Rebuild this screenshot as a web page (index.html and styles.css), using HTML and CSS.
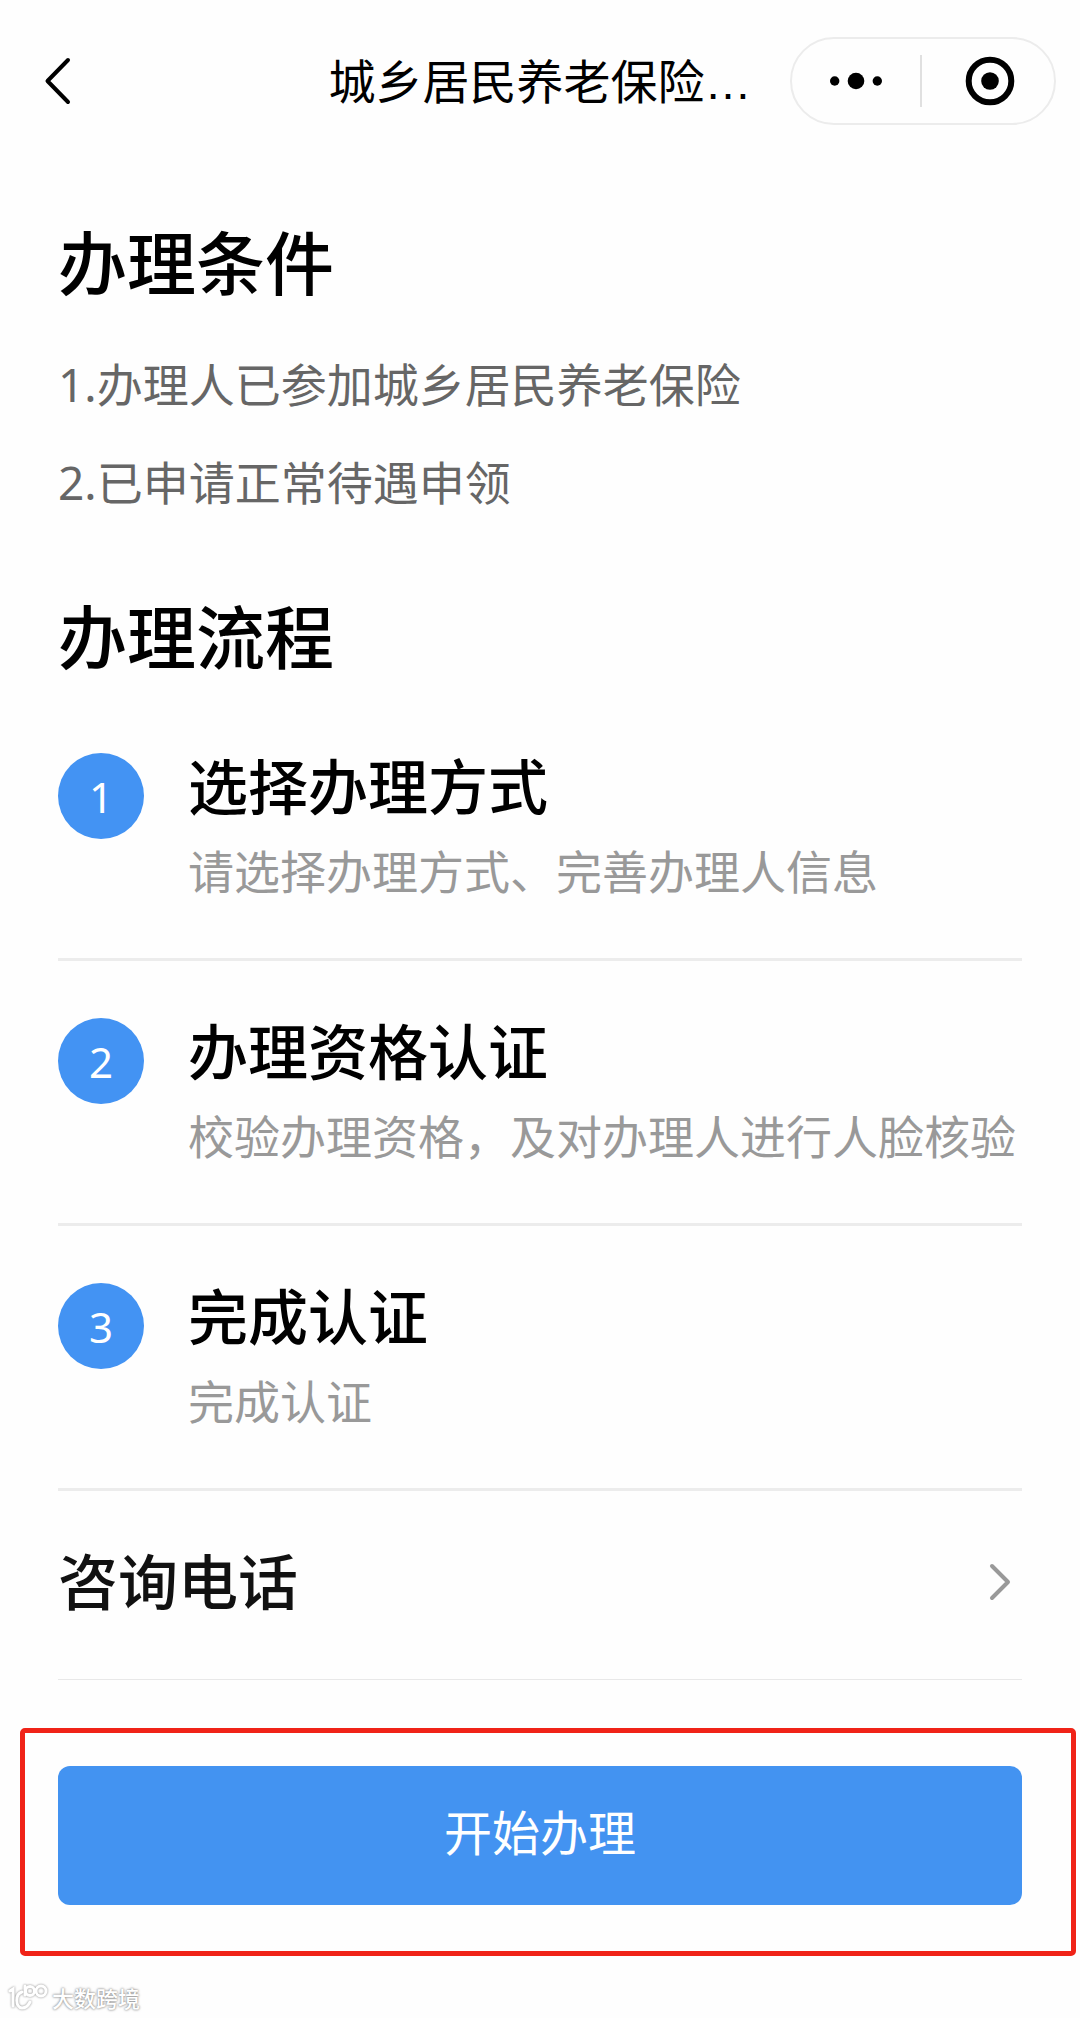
FILE: index.html
```
<!DOCTYPE html>
<html lang="zh-CN">
<head>
    <meta charset="UTF-8">
    <meta name="viewport" content="width=device-width, initial-scale=1.0">
    <title>城乡居民养老保险</title>
    <link rel="stylesheet" href="styles.css">
</head>
<body>
    <header class="navbar">
        <button class="back" aria-label="返回">
            <svg width="28" height="50" viewBox="0 0 28 50" fill="none" stroke="#000" stroke-width="4" stroke-linecap="round" stroke-linejoin="round">
                <path d="M24 4L3.5 25L24 46"/>
            </svg>
        </button>
        <div class="navbar-title">城乡居民养老保险…</div>
        <div class="capsule">
            <button class="capsule-button" aria-label="更多">
                <svg width="52" height="20" viewBox="0 0 52 20">
                    <circle cx="4.7" cy="10" r="4.7"/>
                    <circle cx="26" cy="10" r="8.3"/>
                    <circle cx="47.3" cy="10" r="4.7"/>
                </svg>
            </button>
            <button class="capsule-button" aria-label="关闭">
                <svg width="50" height="50" viewBox="0 0 50 50">
                    <circle cx="25" cy="25" r="21.3" fill="none" stroke="#000" stroke-width="6"/>
                    <circle cx="25" cy="25" r="8.8"/>
                </svg>
            </button>
        </div>
    </header>

    <main class="content">
        <h2 class="section-title">办理条件</h2>
        <div class="conditions">
            <p>1.办理人已参加城乡居民养老保险</p>
            <p>2.已申请正常待遇申领</p>
        </div>

        <h2 class="section-title">办理流程</h2>
        <ol class="steps">
            <li class="step">
                <span class="step-number">1</span>
                <div class="step-body">
                    <h3 class="item-title">选择办理方式</h3>
                    <p class="step-desc">请选择办理方式、完善办理人信息</p>
                </div>
            </li>
            <li class="step">
                <span class="step-number">2</span>
                <div class="step-body">
                    <h3 class="item-title">办理资格认证</h3>
                    <p class="step-desc">校验办理资格，及对办理人进行人脸核验</p>
                </div>
            </li>
            <li class="step">
                <span class="step-number">3</span>
                <div class="step-body">
                    <h3 class="item-title">完成认证</h3>
                    <p class="step-desc">完成认证</p>
                </div>
            </li>
        </ol>

        <a class="contact" href="#">
            <span class="item-title">咨询电话</span>
            <svg width="24" height="40" viewBox="0 0 24 40" fill="none" stroke="#999" stroke-width="4" stroke-linecap="round" stroke-linejoin="round">
                <path d="M4 4L20 20L4 36"/>
            </svg>
        </a>
    </main>

    <div class="highlight">
        <button class="start">开始办理</button>
    </div>

    <footer class="watermark">
        <svg class="watermark-logo" width="40" height="28" viewBox="0 0 40 28" fill="none" stroke="#fff" stroke-width="3" stroke-linecap="round">
            <path d="M2 7L5 5V22"/>
            <path d="M14 8C7 10 7 23 14 24C18 24 20 22 22 18"/>
            <path d="M17 2V11"/>
            <circle cx="22" cy="7" r="4.5"/>
            <circle cx="33" cy="7" r="5"/>
        </svg>
        <span>大数跨境</span>
    </footer>
</body>
</html>
```
FILE: styles.css
```
* {
    box-sizing: border-box;
}

body {
    margin: 0;
    background-color: #fefefe;
    color: #000;
    font-family: "Noto Sans", "Noto Sans CJK SC", sans-serif;
}

h2, h3, p, ol {
    margin: 0;
    padding: 0;
}

button {
    padding: 0;
    border: none;
    background: none;
    font-family: inherit;
    cursor: pointer;
}

svg {
    display: block;
}

.navbar {
    display: grid;
    grid-template-columns: 1fr auto 1fr;
    align-items: center;
    padding: 37px 24px 0;
}

.back {
    justify-self: start;
    margin-left: 20px;
}

.navbar-title {
    padding-top: 4px;
    font-family: "Liberation Sans", "Noto Sans CJK SC", sans-serif;
    font-size: 47px;
    line-height: 60px;
    white-space: nowrap;
}

.capsule {
    justify-self: end;
    display: flex;
    align-items: center;
    width: 266px;
    height: 88px;
    border: 2px solid #ececec;
    border-radius: 44px;
}

.capsule-button {
    flex: 1;
    height: 52px;
    display: flex;
    justify-content: center;
    align-items: center;
}

.capsule-button + .capsule-button {
    padding-left: 4px;
    border-left: 2px solid #e0e0e0;
}

.content {
    padding: 93px 58px 0;
}

.section-title {
    font-size: 69px;
    font-weight: 500;
    line-height: 90px;
}

.conditions {
    margin: 27px 0 61px;
    color: #666;
    font-size: 46px;
    line-height: 98px;
}

.steps {
    margin-top: 14px;
    list-style: none;
}

.step {
    display: flex;
    gap: 44px;
    padding: 55px 0 57px;
    border-bottom: 3px solid #ececec;
}

.step-number {
    flex: none;
    display: flex;
    justify-content: center;
    align-items: center;
    width: 86px;
    height: 86px;
    margin-top: 2px;
    border-radius: 50%;
    background-color: #4393f3;
    color: #fff;
    font-size: 42px;
}

.item-title {
    font-size: 60px;
    font-weight: 500;
    line-height: 72px;
}

.step-desc {
    margin-top: 18px;
    color: #999;
    font-size: 46px;
    line-height: 60px;
}

.contact {
    display: flex;
    justify-content: space-between;
    align-items: center;
    padding: 55px 10px 61px 0;
    border-bottom: 1px solid #e8e8e8;
    color: #111;
    text-decoration: none;
}

.highlight {
    margin: 48px 4px 0 20px;
    padding: 33px 49px 46px 33px;
    border: 5px solid #f02318;
    border-radius: 5px;
}

.start {
    display: block;
    width: 100%;
    height: 139px;
    padding-bottom: 12px;
    border-radius: 12px;
    background-color: #4393f1;
    color: #fff;
    font-size: 48px;
}

.watermark {
    display: flex;
    align-items: center;
    gap: 4px;
    padding: 26px 8px 4px;
    color: #fff;
    font-size: 22px;
    font-weight: 500;
    line-height: 32px;
    text-shadow: 0 0 2px #888, 0 0 3px #aaa;
}

.watermark-logo {
    filter: drop-shadow(0 0 1px #888);
}
```
